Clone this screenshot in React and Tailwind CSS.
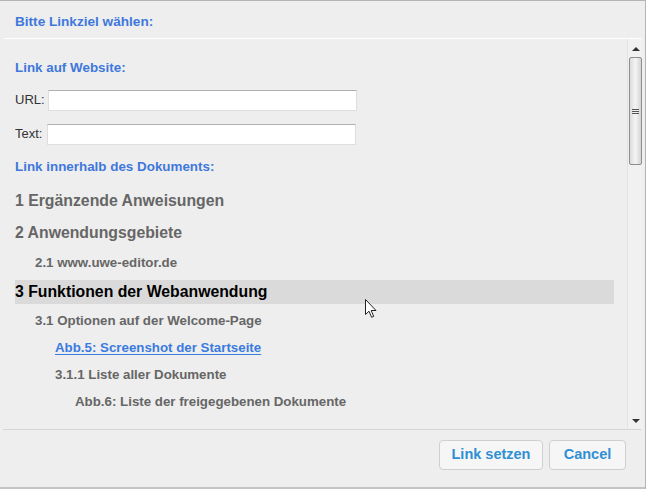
import React from "react";

const font = { fontFamily: '"Liberation Sans", Arial, sans-serif' };

function TreeItem({ children, indent, size = "small", active, link }) {
  const pad = ["pl-0", "pl-[20px]", "pl-[40px]", "pl-[60px]"][indent];
  const text =
    size === "large" ? "text-[15.8px] h-[32px]" : "text-[13.3px] h-[27px]";
  return (
    <div
      className={`flex items-center font-bold ${pad} ${text} ${
        active ? "bg-[#dadada] text-black !h-[24px]" : link ? "text-[#3a7be0]" : "text-[#666666]"
      }`}
    >
      <span className={link ? "underline underline-offset-2" : ""}>{children}</span>
    </div>
  );
}

function Scrollbar() {
  return (
    <div className="w-[16px] flex flex-col bg-[#f1f1f1] border-l border-[#e2e2e2]">
      <div className="h-[18px] flex items-center justify-center pt-[2px]">
        <div className="w-0 h-0 border-l-[4px] border-r-[4px] border-b-[4px] border-l-transparent border-r-transparent border-b-[#333]" />
      </div>
      <div className="h-[108px] mx-[1px] rounded-[2px] border border-[#8e8e8e] bg-gradient-to-r from-[#dcdcdc] via-[#f4f4f4] to-[#d4d4d4] flex flex-col items-center justify-center gap-[1px]">
        <div className="w-[7px] h-px bg-[#555]" />
        <div className="w-[7px] h-px bg-[#555]" />
        <div className="w-[7px] h-px bg-[#555]" />
      </div>
      <div className="flex-1" />
      <div className="h-[16px] flex items-center justify-center">
        <div className="w-0 h-0 border-l-[4px] border-r-[4px] border-t-[4px] border-l-transparent border-r-transparent border-t-[#333]" />
      </div>
    </div>
  );
}

export default function App() {
  return (
    <div
      className="relative w-[646px] h-[489px] bg-[#eeeeee] border-t border-r border-[#b4b4b4] flex flex-col overflow-hidden"
      style={font}
    >
      <div className="h-[37px] flex items-center pl-[15px] pt-[5px] text-[13.6px] font-bold text-[#3f78dc]">
        Bitte Linkziel wählen:
      </div>
      <div className="h-px ml-[4px] mr-[3px] bg-white rounded-full" />

      <div className="h-[390px] flex mr-[2px]">
        <div className="flex-1 pl-[15px] pr-[13px] overflow-hidden">
          <div className="h-[16px]" />
          <div className="h-[26px] flex items-center text-[13.4px] font-bold text-[#3f78dc]">
            Link auf Website:
          </div>
          <div className="h-[38px] flex items-center text-[13px] text-[#333]">
            <span className="w-[33px]">URL:</span>
            <div className="w-[309px] h-[21px] bg-white border border-[#dedede] border-t-[#b0b0b0]" />
          </div>
          <div className="h-[30px] flex items-center text-[13px] text-[#333]">
            <span className="w-[32px]">Text:</span>
            <div className="w-[309px] h-[21px] bg-white border border-[#dedede] border-t-[#b0b0b0]" />
          </div>
          <div className="h-[36px] flex items-center text-[13.4px] font-bold text-[#3f78dc]">
            Link innerhalb des Dokuments:
          </div>
          <TreeItem indent={0} size="large">1 Ergänzende Anweisungen</TreeItem>
          <TreeItem indent={0} size="large">2 Anwendungsgebiete</TreeItem>
          <TreeItem indent={1}>2.1 www.uwe-editor.de</TreeItem>
          <div className="h-[4px]" />
          <TreeItem indent={0} size="large" active>
            3 Funktionen der Webanwendung
          </TreeItem>
          <div className="h-[3px]" />
          <TreeItem indent={1}>3.1 Optionen auf der Welcome-Page</TreeItem>
          <TreeItem indent={2} link>
            Abb.5: Screenshot der Startseite
          </TreeItem>
          <TreeItem indent={2}>3.1.1 Liste aller Dokumente</TreeItem>
          <TreeItem indent={3}>Abb.6: Liste der freigegebenen Dokumente</TreeItem>
        </div>
        <Scrollbar />
      </div>

      <div className="h-px ml-[3px] mr-[4px] bg-[#d6d6d6]" />
      <div className="flex-1 flex justify-end items-start gap-[6px] pt-[10px] pr-[19px]">
        <button className="w-[104px] h-[30px] rounded-[4px] border border-[#cfcfcf] bg-[#f6f6f6] text-[14.5px] font-bold text-[#2f8fd4]">
          Link setzen
        </button>
        <button className="w-[77px] h-[30px] rounded-[4px] border border-[#cfcfcf] bg-[#f6f6f6] text-[14.5px] font-bold text-[#2f8fd4]">
          Cancel
        </button>
      </div>
      <div className="h-[2px] bg-[#c4c4c4]" />

      <svg
        className="absolute left-[365px] top-[298px]"
        width="13"
        height="20"
        viewBox="0 0 13 20"
      >
        <path
          d="M0.5 0.5 L0.5 15.5 L4 12.2 L6.6 18.3 L8.7 17.4 L6.2 11.5 L11 11.5 Z"
          fill="white"
          stroke="#222"
          strokeWidth="1"
          strokeLinejoin="round"
        />
      </svg>
    </div>
  );
}
